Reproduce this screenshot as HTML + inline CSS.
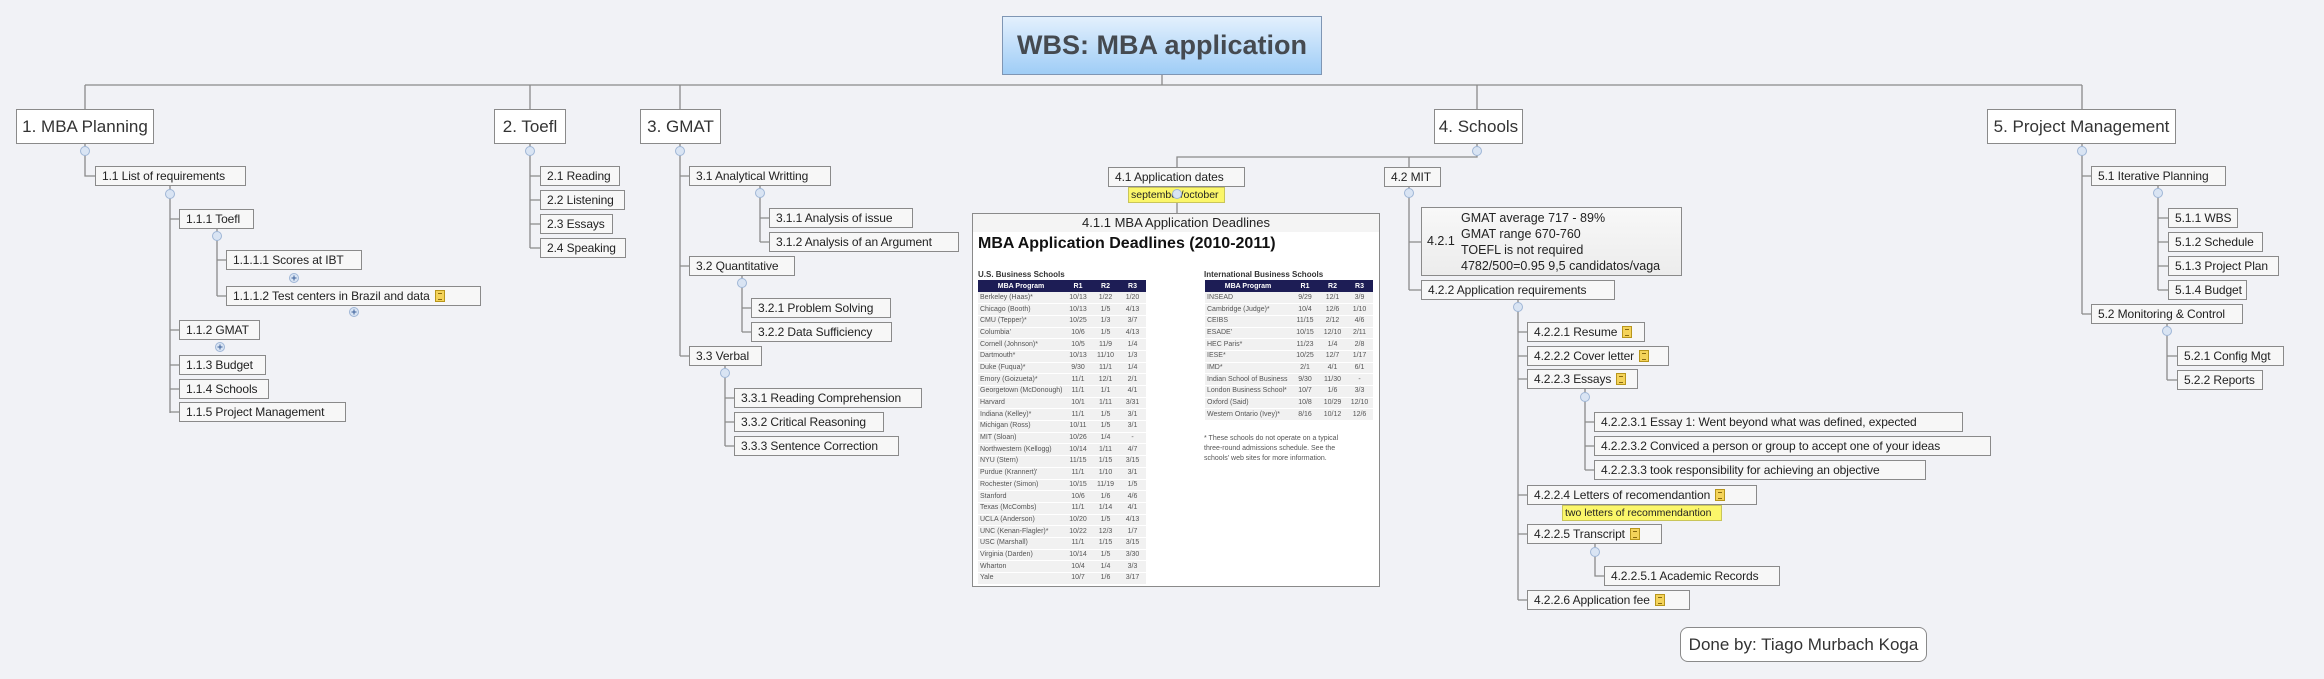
<!DOCTYPE html>
<html><head><meta charset="utf-8"><style>
*{margin:0;padding:0;box-sizing:border-box}
body{width:2324px;height:679px;background:#f1f2f6;position:relative;overflow:hidden;font-family:"Liberation Sans",sans-serif;color:#222}
.b{position:absolute;height:20px;border:1px solid #8a8a8a;background:#f7f7f7;font-size:12px;line-height:18px;padding-left:6px;white-space:nowrap;letter-spacing:-0.1px}
.t{position:absolute;height:35px;border:1px solid #8a8a8a;background:#fff;font-size:17px;line-height:33px;text-align:center;white-space:nowrap;color:#333}
.n{display:inline-block;width:10px;height:12px;background:#f4d35a;border:1px solid #b8961c;vertical-align:-2px;margin-left:5px;position:relative}
.n:after{content:"";position:absolute;left:2px;top:2px;width:4px;height:5px;border-top:1px solid #8a6a10;border-bottom:1px solid #8a6a10}
.note{position:absolute;background:#fbf66a;border:1px solid #c9c55a;font-size:10.5px;line-height:14px;padding:0 2px;white-space:nowrap;overflow:hidden}
table{border-collapse:collapse;font-size:7px;color:#555;position:absolute;table-layout:fixed}
td{height:11.7px;padding:0 2px;border-bottom:1px solid #fff;background:#f1f1f1;white-space:nowrap;overflow:hidden;line-height:10px}
td.r{text-align:center}
th{background:#1d1d55;color:#fff;font-size:7px;height:12px;white-space:nowrap}
</style></head><body>
<svg width="2324" height="679" style="position:absolute;left:0;top:0" fill="none" stroke="#8a8a8a" stroke-width="1.3">
<path d="M85 85H2082M1162 75V85M85 85V109M530 85V109M680 85V109M1477 85V109M2082 85V109
M85 144V176H95
M170 186V413M170 219H179M170 330H179M170 365H179M170 389H179M170 412H179
M217 229V296M217 260H226M217 296H226
M530 144V248M530 176H540M530 200H540M530 224H540M530 248H540
M680 144V356M680 176H689M680 266H689M680 356H689
M760 186V242M760 218H769M760 242H769
M742 276V332M742 308H751M742 332H751
M725 366V446M725 398H734M725 422H734M725 446H734
M1477 144V157H1177V167M1409 157V167M1177 203V213
M1409 187V290M1409 242H1421M1409 290H1421
M1518 300V600M1518 332H1527M1518 356H1527M1518 379H1527M1518 495H1527M1518 534H1527M1518 600H1527
M1585 389V470M1585 422H1594M1585 446H1594M1585 470H1594
M1595 544V576H1604
M2082 144V314M2082 176H2091M2082 314H2091
M2158 186V290M2158 218H2168M2158 242H2168M2158 266H2168M2158 290H2168
M2167 324V380M2167 356H2177M2167 380H2177"/>
<g fill="#d9e4f3" stroke="#9fb6d6" stroke-width="1">
<circle cx="85" cy="151" r="4.5"/><circle cx="170" cy="194" r="4.5"/><circle cx="217" cy="236" r="4.5"/>
<circle cx="530" cy="151" r="4.5"/><circle cx="680" cy="151" r="4.5"/><circle cx="760" cy="193" r="4.5"/>
<circle cx="742" cy="283" r="4.5"/><circle cx="725" cy="373" r="4.5"/><circle cx="1477" cy="151" r="4.5"/>
<circle cx="1409" cy="193" r="4.5"/><circle cx="1518" cy="307" r="4.5"/><circle cx="1585" cy="397" r="4.5"/>
<circle cx="1595" cy="552" r="4.5"/><circle cx="2082" cy="151" r="4.5"/><circle cx="2158" cy="193" r="4.5"/>
<circle cx="2167" cy="331" r="4.5"/>
<circle cx="294" cy="278" r="4.5"/><circle cx="354" cy="312" r="4.5"/><circle cx="220" cy="347" r="4.5"/>
</g>
<g stroke="#3a5f9a" stroke-width="1"><path d="M291.5 278h5M294 275.5v5M351.5 312h5M354 309.5v5M217.5 347h5M220 344.5v5"/></g>
</svg>

<div style="position:absolute;left:1002px;top:16px;width:320px;height:59px;border:1px solid #7f96b4;background:linear-gradient(#e3f0fd,#9fcdf6);font-weight:bold;font-size:27px;line-height:57px;text-align:center;color:#454a50">WBS: MBA application</div>

<div class="t" style="left:16px;top:109px;width:138px">1. MBA Planning</div>
<div class="t" style="left:494px;top:109px;width:72px">2. Toefl</div>
<div class="t" style="left:640px;top:109px;width:81px">3. GMAT</div>
<div class="t" style="left:1434px;top:109px;width:89px">4. Schools</div>
<div class="t" style="left:1987px;top:109px;width:189px">5. Project Management</div>

<div class="b" style="left:95px;top:166px;width:151px">1.1 List of requirements</div>
<div class="b" style="left:179px;top:209px;width:75px">1.1.1 Toefl</div>
<div class="b" style="left:226px;top:250px;width:136px">1.1.1.1 Scores at IBT</div>
<div class="b" style="left:226px;top:286px;width:255px">1.1.1.2 Test centers in Brazil and data<span class="n"></span></div>
<div class="b" style="left:179px;top:320px;width:81px">1.1.2 GMAT</div>
<div class="b" style="left:179px;top:355px;width:87px">1.1.3 Budget</div>
<div class="b" style="left:179px;top:379px;width:90px">1.1.4 Schools</div>
<div class="b" style="left:179px;top:402px;width:167px">1.1.5 Project Management</div>

<div class="b" style="left:540px;top:166px;width:80px">2.1 Reading</div>
<div class="b" style="left:540px;top:190px;width:85px">2.2 Listening</div>
<div class="b" style="left:540px;top:214px;width:73px">2.3 Essays</div>
<div class="b" style="left:540px;top:238px;width:86px">2.4 Speaking</div>

<div class="b" style="left:689px;top:166px;width:142px">3.1 Analytical Writting</div>
<div class="b" style="left:769px;top:208px;width:144px">3.1.1 Analysis of issue</div>
<div class="b" style="left:769px;top:232px;width:190px">3.1.2 Analysis of an Argument</div>
<div class="b" style="left:689px;top:256px;width:106px">3.2 Quantitative</div>
<div class="b" style="left:751px;top:298px;width:140px">3.2.1 Problem Solving</div>
<div class="b" style="left:751px;top:322px;width:141px">3.2.2 Data Sufficiency</div>
<div class="b" style="left:689px;top:346px;width:73px">3.3 Verbal</div>
<div class="b" style="left:734px;top:388px;width:188px">3.3.1 Reading Comprehension</div>
<div class="b" style="left:734px;top:412px;width:150px">3.3.2 Critical Reasoning</div>
<div class="b" style="left:734px;top:436px;width:165px">3.3.3 Sentence Correction</div>

<div class="b" style="left:1108px;top:167px;width:137px">4.1 Application dates</div>
<div class="note" style="left:1128px;top:187px;width:97px;height:16px">september/october</div>
<svg width="10" height="10" style="position:absolute;left:1172px;top:189px"><circle cx="5" cy="5" r="4.5" fill="#d9e4f3" stroke="#9fb6d6"/></svg>

<div style="position:absolute;left:972px;top:213px;width:408px;height:374px;border:1px solid #8a8a8a;background:#fff">
<div style="background:#f4f4f4;height:18px;text-align:center;font-size:13px;line-height:18px;color:#222">4.1.1 MBA Application Deadlines</div>
<div style="position:absolute;left:5px;top:21px;font-weight:bold;font-size:16px;color:#111;white-space:nowrap">MBA Application Deadlines (2010-2011)</div>
<div style="position:absolute;left:5px;top:56px;font-weight:bold;font-size:8px;color:#333;white-space:nowrap">U.S. Business Schools</div>
<div style="position:absolute;left:231px;top:56px;font-weight:bold;font-size:8px;color:#333;white-space:nowrap">International Business Schools</div>
<div style="position:absolute;left:231px;top:220px;font-size:7px;line-height:10px;color:#555;width:150px">* These schools do not operate on a typical three-round admissions schedule. See the schools' web sites for more information.</div>
</div>
<table style="left:978px;top:280px;width:168px">
<colgroup><col style="width:86px"><col style="width:28px"><col style="width:27px"><col style="width:27px"></colgroup>
<tr><th>MBA Program</th><th>R1</th><th>R2</th><th>R3</th></tr>
<tr><td>Berkeley (Haas)*</td><td class="r">10/13</td><td class="r">1/22</td><td class="r">1/20</td></tr>
<tr><td>Chicago (Booth)</td><td class="r">10/13</td><td class="r">1/5</td><td class="r">4/13</td></tr>
<tr><td>CMU (Tepper)*</td><td class="r">10/25</td><td class="r">1/3</td><td class="r">3/7</td></tr>
<tr><td>Columbia'</td><td class="r">10/6</td><td class="r">1/5</td><td class="r">4/13</td></tr>
<tr><td>Cornell (Johnson)*</td><td class="r">10/5</td><td class="r">11/9</td><td class="r">1/4</td></tr>
<tr><td>Dartmouth*</td><td class="r">10/13</td><td class="r">11/10</td><td class="r">1/3</td></tr>
<tr><td>Duke (Fuqua)*</td><td class="r">9/30</td><td class="r">11/1</td><td class="r">1/4</td></tr>
<tr><td>Emory (Goizueta)*</td><td class="r">11/1</td><td class="r">12/1</td><td class="r">2/1</td></tr>
<tr><td>Georgetown (McDonough)</td><td class="r">11/1</td><td class="r">1/1</td><td class="r">4/1</td></tr>
<tr><td>Harvard</td><td class="r">10/1</td><td class="r">1/11</td><td class="r">3/31</td></tr>
<tr><td>Indiana (Kelley)*</td><td class="r">11/1</td><td class="r">1/5</td><td class="r">3/1</td></tr>
<tr><td>Michigan (Ross)</td><td class="r">10/11</td><td class="r">1/5</td><td class="r">3/1</td></tr>
<tr><td>MIT (Sloan)</td><td class="r">10/26</td><td class="r">1/4</td><td class="r">-</td></tr>
<tr><td>Northwestern (Kellogg)</td><td class="r">10/14</td><td class="r">1/11</td><td class="r">4/7</td></tr>
<tr><td>NYU (Stern)</td><td class="r">11/15</td><td class="r">1/15</td><td class="r">3/15</td></tr>
<tr><td>Purdue (Krannert)'</td><td class="r">11/1</td><td class="r">1/10</td><td class="r">3/1</td></tr>
<tr><td>Rochester (Simon)</td><td class="r">10/15</td><td class="r">11/19</td><td class="r">1/5</td></tr>
<tr><td>Stanford</td><td class="r">10/6</td><td class="r">1/6</td><td class="r">4/6</td></tr>
<tr><td>Texas (McCombs)</td><td class="r">11/1</td><td class="r">1/14</td><td class="r">4/1</td></tr>
<tr><td>UCLA (Anderson)</td><td class="r">10/20</td><td class="r">1/5</td><td class="r">4/13</td></tr>
<tr><td>UNC (Kenan-Flagler)*</td><td class="r">10/22</td><td class="r">12/3</td><td class="r">1/7</td></tr>
<tr><td>USC (Marshall)</td><td class="r">11/1</td><td class="r">1/15</td><td class="r">3/15</td></tr>
<tr><td>Virginia (Darden)</td><td class="r">10/14</td><td class="r">1/5</td><td class="r">3/30</td></tr>
<tr><td>Wharton</td><td class="r">10/4</td><td class="r">1/4</td><td class="r">3/3</td></tr>
<tr><td>Yale</td><td class="r">10/7</td><td class="r">1/6</td><td class="r">3/17</td></tr>
</table>
<table style="left:1205px;top:280px;width:168px">
<colgroup><col style="width:86px"><col style="width:28px"><col style="width:27px"><col style="width:27px"></colgroup>
<tr><th>MBA Program</th><th>R1</th><th>R2</th><th>R3</th></tr>
<tr><td>INSEAD</td><td class="r">9/29</td><td class="r">12/1</td><td class="r">3/9</td></tr>
<tr><td>Cambridge (Judge)*</td><td class="r">10/4</td><td class="r">12/6</td><td class="r">1/10</td></tr>
<tr><td>CEIBS</td><td class="r">11/15</td><td class="r">2/12</td><td class="r">4/6</td></tr>
<tr><td>ESADE'</td><td class="r">10/15</td><td class="r">12/10</td><td class="r">2/11</td></tr>
<tr><td>HEC Paris*</td><td class="r">11/23</td><td class="r">1/4</td><td class="r">2/8</td></tr>
<tr><td>IESE*</td><td class="r">10/25</td><td class="r">12/7</td><td class="r">1/17</td></tr>
<tr><td>IMD*</td><td class="r">2/1</td><td class="r">4/1</td><td class="r">6/1</td></tr>
<tr><td>Indian School of Business</td><td class="r">9/30</td><td class="r">11/30</td><td class="r">-</td></tr>
<tr><td>London Business School*</td><td class="r">10/7</td><td class="r">1/6</td><td class="r">3/3</td></tr>
<tr><td>Oxford (Said)</td><td class="r">10/8</td><td class="r">10/29</td><td class="r">12/10</td></tr>
<tr><td>Western Ontario (Ivey)*</td><td class="r">8/16</td><td class="r">10/12</td><td class="r">12/6</td></tr>
</table>

<div class="b" style="left:1384px;top:167px;width:57px">4.2 MIT</div>
<div style="position:absolute;left:1421px;top:207px;width:261px;height:69px;border:1px solid #8a8a8a;background:linear-gradient(#f8f8f8,#ececec);font-size:12.5px;white-space:nowrap">
<div style="position:absolute;left:5px;top:24px;line-height:18px">4.2.1</div>
<div style="position:absolute;left:39px;top:2px;line-height:16px">GMAT average 717 - 89%<br>GMAT range 670-760<br>TOEFL is not required<br>4782/500=0.95 9,5 candidatos/vaga</div></div>
<div class="b" style="left:1421px;top:280px;width:194px">4.2.2 Application requirements</div>
<div class="b" style="left:1527px;top:322px;width:118px">4.2.2.1 Resume<span class="n"></span></div>
<div class="b" style="left:1527px;top:346px;width:142px">4.2.2.2 Cover letter<span class="n"></span></div>
<div class="b" style="left:1527px;top:369px;width:111px">4.2.2.3 Essays<span class="n"></span></div>
<div class="b" style="left:1594px;top:412px;width:369px">4.2.2.3.1 Essay 1: Went beyond what was defined, expected</div>
<div class="b" style="left:1594px;top:436px;width:397px">4.2.2.3.2 Conviced a person or group to accept one of your ideas</div>
<div class="b" style="left:1594px;top:460px;width:332px">4.2.2.3.3 took responsibility for achieving an objective</div>
<div class="b" style="left:1527px;top:485px;width:230px">4.2.2.4 Letters of recomendantion<span class="n"></span></div>
<div class="note" style="left:1562px;top:505px;width:160px;height:16px">two letters of recommendantion</div>
<div class="b" style="left:1527px;top:524px;width:135px">4.2.2.5 Transcript<span class="n"></span></div>
<div class="b" style="left:1604px;top:566px;width:176px">4.2.2.5.1 Academic Records</div>
<div class="b" style="left:1527px;top:590px;width:163px">4.2.2.6 Application fee<span class="n"></span></div>

<div class="b" style="left:2091px;top:166px;width:135px">5.1 Iterative Planning</div>
<div class="b" style="left:2168px;top:208px;width:70px">5.1.1 WBS</div>
<div class="b" style="left:2168px;top:232px;width:95px">5.1.2 Schedule</div>
<div class="b" style="left:2168px;top:256px;width:111px">5.1.3 Project Plan</div>
<div class="b" style="left:2168px;top:280px;width:79px">5.1.4 Budget</div>
<div class="b" style="left:2091px;top:304px;width:152px">5.2 Monitoring &amp; Control</div>
<div class="b" style="left:2177px;top:346px;width:107px">5.2.1 Config Mgt</div>
<div class="b" style="left:2177px;top:370px;width:86px">5.2.2 Reports</div>

<div style="position:absolute;left:1680px;top:627px;width:247px;height:35px;border:1px solid #8a8a8a;border-radius:8px;background:#fff;font-size:17px;line-height:33px;text-align:center;color:#333;white-space:nowrap">Done by: Tiago Murbach Koga</div>
</body></html>
